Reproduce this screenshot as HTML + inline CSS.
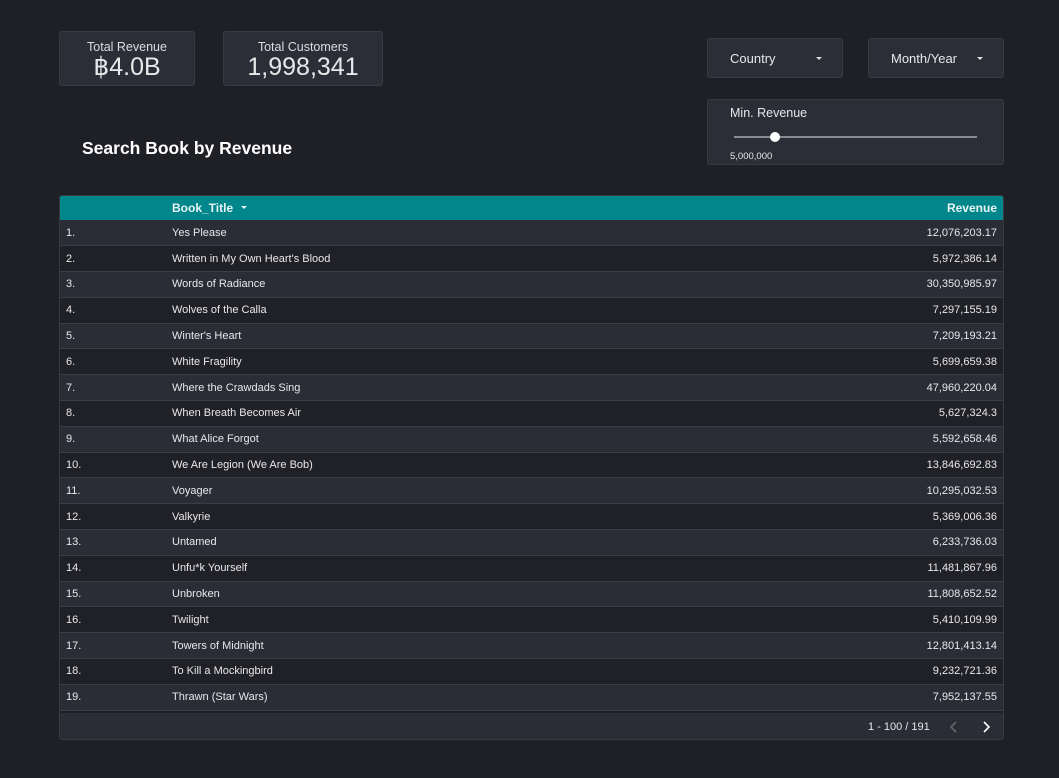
<!DOCTYPE html>
<html><head><style>
*{box-sizing:border-box;margin:0;padding:0}
body{width:1059px;height:778px;background:#1f2025;font-family:"Liberation Sans","DejaVu Sans",sans-serif;color:#e8e8ea;position:relative;overflow:hidden}
.card{position:absolute;background:#2c2e37;border:1px solid #383a44;border-radius:3px}
.kpi{text-align:center}
.kpi .l{font-size:12.5px;margin-top:8px;color:#dcdde0}
.kpi .v{font-size:25px;line-height:26px}
.dd{font-size:13px;display:flex;align-items:center}
.tri{position:absolute;width:0;height:0;border-left:3px solid transparent;border-right:3px solid transparent;border-top:3px solid #ddd}
h1{position:absolute;left:82px;top:138px;font-size:17.5px;font-weight:bold;color:#fff}
table{border-collapse:collapse;width:100%;font-size:11px}
td{height:25.8px;padding:0 6px;border-bottom:1px solid #3a3c46;line-height:12px}
tr:nth-child(odd) td{background:#2b2d36}
tr:nth-child(even) td{background:#202126}
</style></head><body>
<div class="card kpi" style="left:59px;top:31px;width:136px;height:55px"><div class="l">Total Revenue</div><div class="v">฿4.0B</div></div>
<div class="card kpi" style="left:223px;top:31px;width:160px;height:55px"><div class="l">Total Customers</div><div class="v">1,998,341</div></div>
<div class="card dd" style="left:707px;top:38px;width:136px;height:40px"><span style="margin-left:22px">Country</span><div class="tri" style="left:108px;top:18px"></div></div>
<div class="card dd" style="left:868px;top:38px;width:136px;height:40px"><span style="margin-left:22px">Month/Year</span><div class="tri" style="left:108px;top:18px"></div></div>
<div class="card" style="left:707px;top:99px;width:297px;height:66px">
<div style="position:absolute;left:22px;top:6px;font-size:12.5px">Min. Revenue</div>
<div style="position:absolute;left:26px;top:36px;width:243px;height:2px;background:#8a8b90"></div>
<div style="position:absolute;left:62px;top:32px;width:10px;height:10px;border-radius:50%;background:#fff"></div>
<div style="position:absolute;left:22px;top:51px;font-size:9.5px">5,000,000</div>
</div>
<h1>Search Book by Revenue</h1>
<div class="card" style="left:59px;top:195px;width:945px;height:545px;overflow:hidden;border:1px solid #383a44">
<div style="height:24px;background:#00868b;position:relative;font-size:12px;font-weight:bold;color:#e8f4f4">
<span style="position:absolute;left:112px;top:5px">Book_Title</span><div class="tri" style="left:181px;top:10px;border-top-color:#e8f4f4"></div>
<span style="position:absolute;right:6px;top:5px">Revenue</span></div>
<table>
<colgroup><col style="width:106px"><col><col style="width:200px"></colgroup>
<tr><td>1.</td><td>Yes Please</td><td align="right">12,076,203.17</td></tr>
<tr><td>2.</td><td>Written in My Own Heart's Blood</td><td align="right">5,972,386.14</td></tr>
<tr><td>3.</td><td>Words of Radiance</td><td align="right">30,350,985.97</td></tr>
<tr><td>4.</td><td>Wolves of the Calla</td><td align="right">7,297,155.19</td></tr>
<tr><td>5.</td><td>Winter's Heart</td><td align="right">7,209,193.21</td></tr>
<tr><td>6.</td><td>White Fragility</td><td align="right">5,699,659.38</td></tr>
<tr><td>7.</td><td>Where the Crawdads Sing</td><td align="right">47,960,220.04</td></tr>
<tr><td>8.</td><td>When Breath Becomes Air</td><td align="right">5,627,324.3</td></tr>
<tr><td>9.</td><td>What Alice Forgot</td><td align="right">5,592,658.46</td></tr>
<tr><td>10.</td><td>We Are Legion (We Are Bob)</td><td align="right">13,846,692.83</td></tr>
<tr><td>11.</td><td>Voyager</td><td align="right">10,295,032.53</td></tr>
<tr><td>12.</td><td>Valkyrie</td><td align="right">5,369,006.36</td></tr>
<tr><td>13.</td><td>Untamed</td><td align="right">6,233,736.03</td></tr>
<tr><td>14.</td><td>Unfu*k Yourself</td><td align="right">11,481,867.96</td></tr>
<tr><td>15.</td><td>Unbroken</td><td align="right">11,808,652.52</td></tr>
<tr><td>16.</td><td>Twilight</td><td align="right">5,410,109.99</td></tr>
<tr><td>17.</td><td>Towers of Midnight</td><td align="right">12,801,413.14</td></tr>
<tr><td>18.</td><td>To Kill a Mockingbird</td><td align="right">9,232,721.36</td></tr>
<tr><td>19.</td><td>Thrawn (Star Wars)</td><td align="right">7,952,137.55</td></tr>
</table>
<div style="position:absolute;left:0;right:0;top:515px;height:29px;background:#2b2d36;border-top:2px solid #1f2025;font-size:11px">
<span style="position:absolute;left:808px;top:8px">1 - 100 / 191</span>
<svg style="position:absolute;left:888px;top:7px" width="12" height="14"><path d="M8 2 L3 7 L8 12" stroke="#666" stroke-width="1.6" fill="none"/></svg>
<svg style="position:absolute;left:920px;top:7px" width="12" height="14"><path d="M4 2 L9 7 L4 12" stroke="#fff" stroke-width="1.6" fill="none"/></svg>
</div>
</div>
</body></html>
